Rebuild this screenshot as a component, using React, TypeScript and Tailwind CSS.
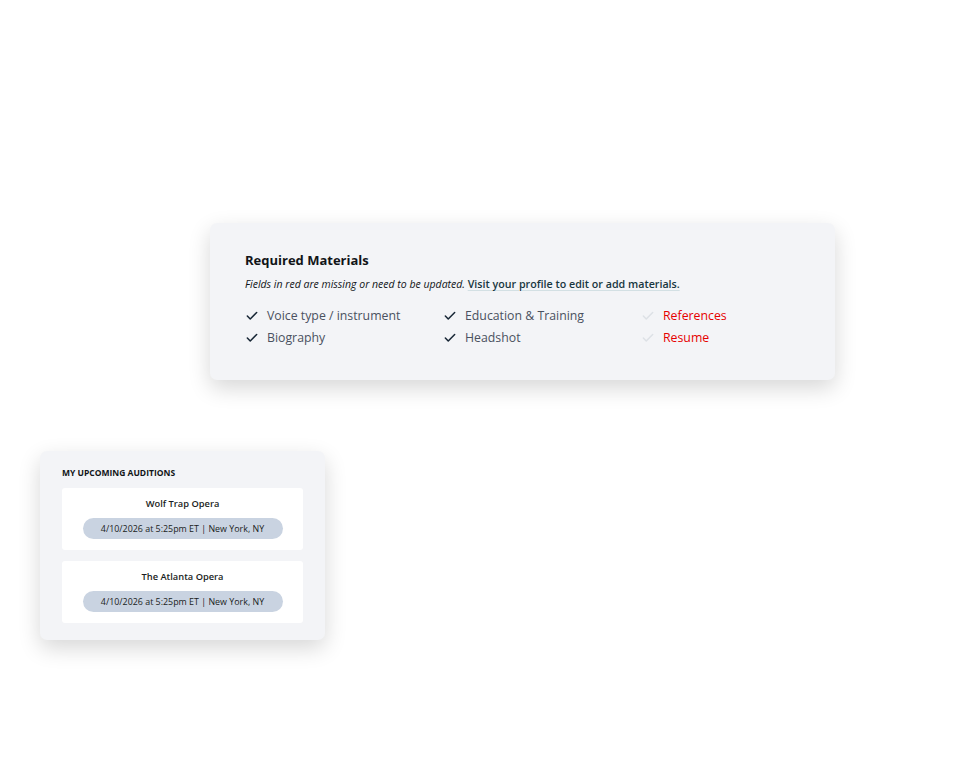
import { Check } from 'lucide-react';

type Material = { label: string; done: boolean };

const materials: Material[] = [
  { label: 'Voice type / instrument', done: true },
  { label: 'Education & Training', done: true },
  { label: 'References', done: false },
  { label: 'Biography', done: true },
  { label: 'Headshot', done: true },
  { label: 'Resume', done: false },
];

const auditions = [
  { company: 'Wolf Trap Opera', when: '4/10/2026 at 5:25pm ET', where: 'New York, NY' },
  { company: 'The Atlanta Opera', when: '4/10/2026 at 5:25pm ET', where: 'New York, NY' },
];

const App = () => {
  return (
    <div
      className="min-h-[764px] w-[980px] bg-white flex flex-col"
      style={{ fontFamily: '"Open Sans", "Noto Sans", sans-serif' }}
    >
      {/* required materials */}
      <div className="ml-[210px] mt-[223px] w-[625px] h-[157px] rounded-[7px] bg-[#f3f4f7] shadow-[0_8px_22px_rgba(0,0,0,0.16)] pl-[35px] pt-[28px]">
        <h2 className="text-[13px] leading-[18px] font-bold text-[#111418]">Required Materials</h2>
        <p className="mt-[8px] text-[10.5px] leading-[14px] text-[#111418]">
          <span className="italic">Fields in red are missing or need to be updated. </span>
          <a className="text-[10.7px] font-semibold text-[#183640] underline decoration-[#d3e0e4] underline-offset-2 cursor-pointer">
            Visit your profile to edit or add materials.
          </a>
        </p>

        <div className="mt-[16px] grid grid-cols-[198px_198px_198px] gap-y-[4px]">
          {materials.map((m) => (
            <div key={m.label} className="flex items-center h-[18px]">
              <Check
                className={m.done ? 'text-[#172635]' : 'text-[#dde1e6]'}
                size={14}
                strokeWidth={2.6}
              />
              <span
                className={`ml-[8px] text-[12.3px] ${m.done ? 'text-[#4a5160]' : 'text-[#e60000]'}`}
              >
                {m.label}
              </span>
            </div>
          ))}
        </div>
      </div>

      {/* upcoming auditions */}
      <div className="ml-[40px] mt-[71px] w-[285px] h-[189px] rounded-[7px] bg-[#f3f4f7] shadow-[0_8px_22px_rgba(0,0,0,0.16)] px-[22px] pt-[16px]">
        <h3 className="text-[8.5px] leading-[12px] font-bold uppercase text-[#111418]">My upcoming auditions</h3>
        <div className="mt-[9px] flex flex-col gap-[11px]">
          {auditions.map((a) => (
            <div key={a.company} className="h-[62px] rounded-[3px] bg-white flex flex-col items-center pt-[9px]">
              <div className="text-[9.3px] leading-[14px] font-semibold text-[#1a1d22]">{a.company}</div>
              <div className="mt-[7px] w-[200px] h-[21px] rounded-full bg-[#c9d3e1] flex items-center justify-center text-[8.9px] text-[#1a1d22]">
                {a.when} | {a.where}
              </div>
            </div>
          ))}
        </div>
      </div>
    </div>
  );
};

export default App;
